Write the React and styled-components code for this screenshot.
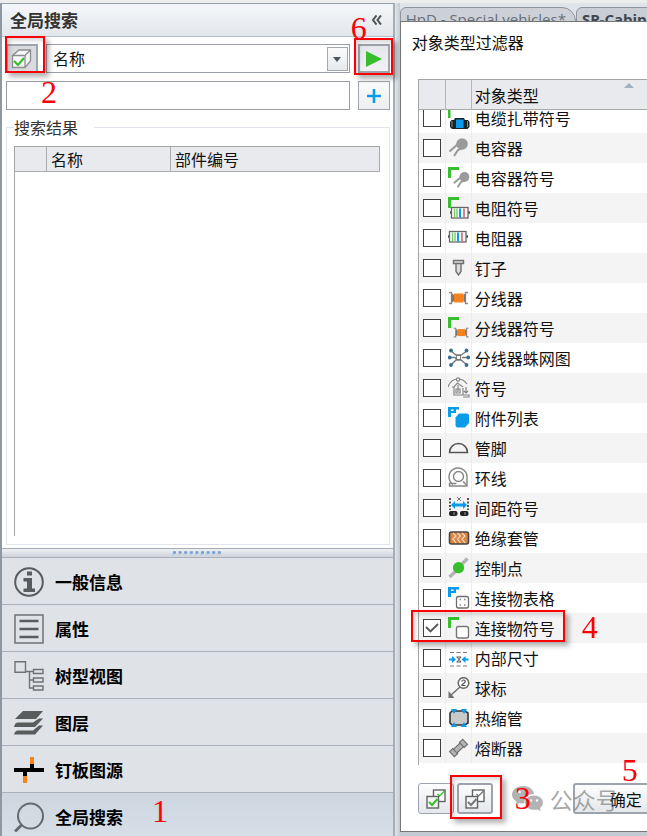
import { useLayoutEffect, useRef, useState } from "react";
import styled, { createGlobalStyle } from "styled-components";

const GlobalStyle = createGlobalStyle`
  * {
    box-sizing: border-box;
  }
  body {
    margin: 0;
    overflow: hidden;
    background: #ffffff;
    color: #111111;
    font-family: "Noto Sans CJK SC", sans-serif;
    font-size: 16px;
    line-height: 24px;
  }
  button, input, select {
    font: inherit;
    color: inherit;
    margin: 0;
  }
`;

const Page = styled.div`
  display: grid;
  grid-template-columns: minmax(0, 61fr) minmax(0, 39fr);
  height: 100vh;
  padding-top: 3px;
  background: #ededee;
`;

/* ---------- left panel ---------- */

const Sidebar = styled.aside`
  display: flex;
  flex-direction: column;
  min-height: 0;
  border-top: 1px solid #98a1aa;
  border-left: 2px solid #8e98a2;
  border-right: 2px solid #a4aeb9;
  background: #ffffff;
`;

const SidebarHeader = styled.header`
  display: flex;
  align-items: center;
  justify-content: space-between;
  height: 33px;
  flex: none;
  padding: 0 10px 0 8px;
  border-bottom: 1px solid #b3c0cc;
  background: linear-gradient(#f5f7f9, #e2e6eb);
`;

const SidebarTitle = styled.h1`
  margin: 0;
  font-size: 17px;
  font-weight: 700;
  color: #333333;
`;

const CollapseButton = styled.button`
  display: flex;
  padding: 0;
  border: 0;
  background: none;
`;

const SearchForm = styled.form`
  display: flex;
  flex-direction: column;
  gap: 8px;
  padding: 7px 3px 6px 4px;
`;

const SearchRow = styled.div`
  display: flex;
  gap: 8px;
  height: 29px;
`;

const Anchor = styled.div`
  position: relative;
  display: flex;
`;

const ToolButton = styled.button`
  display: flex;
  align-items: center;
  justify-content: center;
  width: 32px;
  padding: 0;
  border: ${({ $pressed }) => ($pressed ? "2px" : "1px")} solid #9fa5ad;
  background: ${({ $pressed }) =>
    $pressed ? "#d9dbdf" : "linear-gradient(#fbfbfc, #eceef1)"};
`;

const RunButton = styled(ToolButton)`
  background: linear-gradient(#e4e6e9, #f1f2f4);
`;

const SelectBox = styled.div`
  position: relative;
  display: flex;
  flex: 1;
`;

const FieldSelect = styled.select`
  flex: 1;
  appearance: none;
  padding: 0 28px 2px 6px;
  border: 1px solid #9a9fa7;
  border-radius: 0;
  background: #ffffff;
`;

const SelectArrow = styled.span`
  position: absolute;
  top: 3px;
  right: 2px;
  bottom: 2px;
  width: 21px;
  display: flex;
  align-items: center;
  justify-content: center;
  border: 1px solid #a3a9b2;
  background: linear-gradient(#fbfbfc, #e6e9ed);
  pointer-events: none;
`;

const SearchInput = styled.input`
  flex: 1;
  min-width: 0;
  padding: 0 6px;
  border: 1px solid #9a9fa7;
  background: #ffffff;
`;

const ResultGroup = styled.fieldset`
  display: flex;
  flex-direction: column;
  flex: 1;
  min-height: 0;
  min-width: 0;
  margin: 0 3px 3px 4px;
  padding: 8px 9px 8px 7px;
  border: 1px solid #e1e4ec;
`;

const GroupTitle = styled.legend`
  padding: 0 16px 0 0;
  line-height: 22px;
  color: #333333;
`;

const ResultArea = styled.div`
  flex: 1;
  border-left: 1px solid #a5a5a5;
`;

const ResultTable = styled.table`
  width: 100%;
  table-layout: fixed;
  border-collapse: separate;
  border-spacing: 0;
  border-top: 1px solid #a5a5a5;
`;

const ResultHead = styled.th`
  width: ${({ $width }) => $width || "auto"};
  height: 25px;
  padding: 0 4px;
  border-right: 1px solid #a9abae;
  border-bottom: 1px solid #a9abae;
  background: #e9eaee;
  font-weight: 400;
  line-height: 22px;
  text-align: left;
`;

const Splitter = styled.div`
  display: flex;
  justify-content: center;
  align-items: center;
  flex: none;
  height: 10px;
  border-top: 1px solid #a3adb8;
  border-bottom: 1px solid #a9b2bc;
  background: linear-gradient(#eef0f3, #ced3da);
`;

const Nav = styled.nav`
  display: flex;
  flex-direction: column;
  flex: none;
`;

const NavItem = styled.a`
  position: relative;
  display: flex;
  align-items: center;
  gap: 11px;
  padding: 9px 12px 7px;
  border-bottom: 1px solid #a9b2bc;
  background: ${({ $active }) =>
    $active ? "linear-gradient(#cdd5df, #d6dee8)" : "#dfe2e7"};
  color: #000000;
  font-size: 17px;
  font-weight: 700;
  text-decoration: none;

  &:last-child {
    padding-bottom: 4px;
    border-bottom: 0;
  }
`;

/* ---------- right side ---------- */

const Workspace = styled.main`
  display: flex;
  flex-direction: column;
  min-width: 0;
  min-height: 0;
  padding: 0 0 4px 5px;
  background: linear-gradient(90deg, #e3e6ea, #c4cad1 5px);
  overflow: hidden;
`;

const TabStrip = styled.div`
  display: flex;
  flex: none;
  height: 18px;
  padding-top: 4px;
  background: #dfe4ea;
  overflow: hidden;
`;

const Tab = styled.button`
  display: flex;
  flex: none;
  height: 30px;
  padding: 1px 9px 0 5px;
  border: 1px solid #8e959d;
  border-radius: 6px 14px 0 0;
  background: ${({ $active }) => ($active ? "#c9ced5" : "#cdd1d7")};
  color: ${({ $active }) => ($active ? "#3c4650" : "#64707d")};
  font-family: "Open Sans", sans-serif;
  font-size: 15px;
  font-weight: ${({ $active }) => ($active ? 700 : 400)};
  line-height: 20px;
  white-space: nowrap;
`;

const Dialog = styled.section`
  display: flex;
  flex-direction: column;
  flex: 1;
  min-height: 0;
  border: 1px solid #767676;
  border-right: 0;
  background: #ffffff;
`;

const DialogTitle = styled.h2`
  flex: none;
  height: 57px;
  margin: 0;
  padding: 8px 11px;
  font-size: 16px;
  font-weight: 400;
`;

const ListFrame = styled.div`
  position: relative;
  display: flex;
  flex: 1;
  min-height: 0;
  margin-left: 17px;
`;

const ListScroller = styled.div`
  flex: 1;
  padding-bottom: 2px;
  border-left: 1px solid #a5a5a5;
  overflow: auto;
  scrollbar-width: none;
`;

const TypeTable = styled.table`
  width: 100%;
  table-layout: fixed;
  border-collapse: separate;
  border-spacing: 0;
`;

const TypeHead = styled.th`
  position: sticky;
  top: 0;
  z-index: 1;
  width: ${({ $width }) => $width || "auto"};
  height: 31px;
  padding: 0 3px;
  border-top: 1px solid #a5a5a5;
  border-right: 1px solid #b4b5b8;
  border-bottom: 1px solid #a9a9a9;
  background: #e9eaee;
  font-weight: 400;
  text-align: left;

  &:last-child {
    border-right: 0;
  }
`;

const HeadContent = styled.span`
  display: flex;
  align-items: flex-start;
  justify-content: space-between;
  padding-right: 10px;
`;

const TypeRow = styled.tr`
  background: #ffffff;

  &:nth-child(even) {
    background: #f4f4f4;
  }
`;

const TypeCell = styled.td`
  height: 30px;
  padding: 0 ${({ $icon }) => ($icon ? "2px" : "3px")};
  border-right: 1px solid #ececec;
  line-height: 0;
  white-space: nowrap;

  &:last-child {
    border-right: 0;
  }
`;

const TypeLabel = styled.label`
  line-height: 24px;
`;

const Check = styled.input`
  appearance: none;
  display: block;
  width: 18px;
  height: 18px;
  margin: 0 auto;
  border: 1px solid #3f3f3f;
  background: #ffffff;
`;

const CheckBoxWrap = styled.span`
  position: relative;
  display: block;

  svg {
    position: absolute;
    inset: 0;
    margin: auto;
    pointer-events: none;
  }
`;

const DialogFooter = styled.footer`
  position: relative;
  display: flex;
  gap: 3px;
  flex: none;
  padding: 18px 0 17px 17px;
`;

const FooterButton = styled.button`
  display: flex;
  align-items: center;
  justify-content: center;
  flex: none;
  height: 31px;
  min-width: 36px;
  padding: 0 ${({ $wide }) => ($wide ? "35px" : "0")};
  margin-left: ${({ $wide }) => ($wide ? "77px" : "0")};
  border: ${({ $strong }) => ($strong ? "2px" : "1px")} solid #9ca3ae;
  border-radius: 3px;
  background: linear-gradient(#fdfdfd, #e4e7eb);
`;

const Watermark = styled.div`
  position: absolute;
  top: 18px;
  left: 111px;
  display: flex;
  align-items: center;
  gap: 6px;
  color: rgba(110, 110, 110, 0.6);
  font-size: 23px;
  line-height: 32px;
  white-space: nowrap;
  pointer-events: none;
`;

/* ---------- red step marks ---------- */

const MarkBox = styled.span`
  position: absolute;
  z-index: 2;
  top: ${({ $top }) => $top}px;
  left: ${({ $left }) => $left}px;
  width: ${({ $width }) => $width}px;
  height: ${({ $height }) => $height}px;
  border: 2px solid #fb0007;
  box-shadow: 4px 4px 5px rgba(0, 0, 0, 0.3), inset 3px 3px 4px rgba(0, 0, 0, 0.15);
  pointer-events: none;
`;

const MarkNumber = styled.span`
  position: absolute;
  z-index: 3;
  top: ${({ $top }) => $top}px;
  left: ${({ $left }) => $left}px;
  color: #fb0007;
  font-family: "Liberation Serif", serif;
  font-size: 32px;
  font-weight: 400;
  line-height: 32px;
  pointer-events: none;
`;

/* ---------- icons ---------- */

const GREEN = "#37be2d";
const BLUE = "#0a9bea";
const ORANGE = "#f5821f";
const GRAY = "#9a9a9a";
const DARK = "#595b5d";

const GreenCorner = () => <path d="M0 0h11v3H3v8H0z" fill={GREEN} />;

const BlueFlag = () => (
  <path d="M0 0h11v2.500H8V6H3v4H0zM3 2.500v1.500h2.500V2.500z" fill={BLUE} fillRule="evenodd" />
);

const Resistor = ({ y = 0, x = 0 }) => (
  <g transform={`translate(${x} ${y})`} fill="none">
    <path d="M0 5.500h2M18 5.500h2" stroke="#555" strokeWidth="2.500" />
    <rect x="1.500" y="0.500" width="16.500" height="10.500" fill="#fff" stroke="#666" strokeWidth="1.300" />
    <path d="M4.500 1.500v9M7 1.500v9" stroke="#75c96d" strokeWidth="1.400" />
    <path d="M10 1.500v9" stroke={BLUE} strokeWidth="2" />
    <path d="M14 1.500v9" stroke="#c96a6a" strokeWidth="1.600" />
  </g>
);

const Capacitor = () => (
  <>
    <circle cx="14" cy="7" r="5.800" fill={GRAY} />
    <path d="M10 7 1.500 14.500M14 11l-4 2-4 6" stroke={GRAY} strokeWidth="2.200" fill="none" />
  </>
);

const Splice = () => (
  <>
    <rect x="6" y="6.500" width="9.500" height="9" fill={ORANGE} />
    <path d="M1 5.500h2.500v11H1M20 5.500h-2.500v11H20" fill="none" stroke="#8a8a8a" strokeWidth="1.300" />
    <path d="M3.500 6 6 8v6l-2.500 2zM17.500 6 15.500 8v6l2 2z" fill="#777" />
  </>
);

const typeIcons = {
  cableTie: (
    <>
      <path d="M0 0h2.500v11H0z" fill={GREEN} />
      <path d="M7 11h9l1 2h3l1.500 2v5l-2 2H4l-2-2v-5l1.500-2H6z" fill="#1c2226" />
      <path d="M8 12.500h7.500V21H8z" fill={BLUE} />
      <path d="M4 14v6M19.500 14v6" stroke="#8a8a8a" />
    </>
  ),
  capacitor: <Capacitor />,
  capacitorSymbol: (
    <>
      <GreenCorner />
      <g transform="translate(4.500 4) scale(.85)">
        <Capacitor />
      </g>
    </>
  ),
  resistorSymbol: (
    <>
      <GreenCorner />
      <Resistor x={2} y={10} />
    </>
  ),
  resistor: <Resistor y={4} />,
  nail: (
    <path
      d="M5.500 3.500h10v3h-10zM8 6.500h5v8L10.500 18 8 14.500z"
      fill="#ddd"
      stroke="#707070"
      strokeWidth="1.400"
    />
  ),
  splice: <Splice />,
  spliceSymbol: (
    <>
      <GreenCorner />
      <g transform="translate(5 7) scale(.78)">
        <Splice />
      </g>
    </>
  ),
  spider: (
    <>
      <path
        d="M3 4l5 4h5l6-4M3 18l5-5h5l6 5M1 10.500h6l2 2M20 10.500h-6M8 8l5 5M13 8l-5 5"
        fill="none"
        stroke="#777"
        strokeWidth="1.300"
      />
      <rect x="8.500" y="8.500" width="4" height="4" fill="#fff" stroke="#777" />
      {[
        [3, 3.5],
        [18.5, 3.5],
        [1.7, 10.5],
        [20.2, 10.5],
        [3, 18],
        [18.5, 18],
      ].map(([cx, cy]) => (
        <circle key={`${cx}-${cy}`} cx={cx} cy={cy} r="1.900" fill="#356f92" />
      ))}
    </>
  ),
  symbol: (
    <g fill="none" stroke="#858585" strokeWidth="1.200">
      <path d="M0 10C2 4 6 2 10 2s7 2 9 5" />
      <circle cx="10" cy="2.500" r="1.600" fill="#fff" />
      <path d="M4 10h2l3.500-4L15 10M6 10v8h9v-7M10 8v7M8 12h4v4H8zM15 18h6v2h-6M18 10v6m-2-2 2 2 2-2" />
    </g>
  ),
  attachment: (
    <>
      <BlueFlag />
      <path d="M11 6.500h8.500l1.500 1.500v8l-4 4.500H9L7.500 19v-8.500z" fill={BLUE} />
    </>
  ),
  pin: (
    <path
      d="M1.500 15.500c0-5 4-9 9-9s9 4 9 9z"
      fill="none"
      stroke="#555"
      strokeWidth="1.500"
    />
  ),
  loop: (
    <g fill="none" stroke="#858585" strokeWidth="1.400">
      <path d="M5 17.500a9 9 0 1 1 14-8V19H1.500v-2.500h7" />
      <circle cx="10.500" cy="9.500" r="5" />
      <path d="M15 14.500l4 4" />
    </g>
  ),
  distance: (
    <>
      <path d="M2 1v12M20 1v12" stroke="#222" strokeWidth="1.500" strokeDasharray="2 1.500" />
      <path d="M9 0l4 4M13 0L9 4" stroke="#777" />
      <path d="M3 8l4-4v2.500h8V4l4 4-4 4V9.500H7V12z" fill={BLUE} />
      <rect x="1" y="14" width="8.500" height="5" rx="2" fill="#222" />
      <rect x="12" y="14" width="8.500" height="5" rx="2" fill="#222" />
      <path d="M6 15v3M17 15v3" stroke="#999" />
    </>
  ),
  sleeve: (
    <>
      <rect x="1.500" y="5" width="19" height="12" rx="2" fill="#d98746" stroke="#444" strokeWidth="1.600" />
      <path
        d="M5 6l3 3-3 3 3 4M9.500 6l3 3-3 3 3 4M14 6l3 3-3 3 3 4"
        fill="none"
        stroke="#f8d9bd"
        strokeWidth="1.200"
      />
    </>
  ),
  control: (
    <>
      <path d="M1.500 20 8 14M13 8l6.500-6.500" stroke="#b4b4b4" strokeWidth="3.500" />
      <circle cx="10.500" cy="10.700" r="5.600" fill={GREEN} />
    </>
  ),
  connectorTable: (
    <>
      <BlueFlag />
      <rect x="8.500" y="9.500" width="12" height="11.500" rx="2" fill="#fff" stroke="#6e6e6e" strokeWidth="1.300" />
      <path d="M11.500 12.500h1.500M16 12.500h1.500M11.500 18h1.500M16 18h1.500" stroke="#888" strokeWidth="1.500" />
    </>
  ),
  connectorSymbol: (
    <>
      <GreenCorner />
      <rect x="8.500" y="9.500" width="12" height="11.500" rx="2" fill="#fff" stroke="#777" strokeWidth="1.400" />
    </>
  ),
  innerSize: (
    <>
      <path d="M2 5.500h18M2 19h18" stroke="#777" strokeWidth="1.200" strokeDasharray="4 2.500" />
      <path d="M1 11.500h3V9l4 3.500L4 16v-2.500H1zM20.500 11.500h-3V9l-4 3.500 4 3.500v-2.500h3z" fill={BLUE} />
      <path d="M8.500 10h4.500M8.500 15h4.500M9 10l4 5M13 10l-4 5" stroke="#555" />
    </>
  ),
  balloon: (
    <>
      <circle cx="15.500" cy="6" r="5.300" fill="#fff" stroke="#666" strokeWidth="1.500" />
      <path d="M13.800 4.500c0-2 3.500-2 3.500 0 0 1.500-3.500 2.500-3.500 4h3.800" fill="none" stroke="#555" strokeWidth="1.200" />
      <path d="M12 10 3 18" stroke="#707070" strokeWidth="1.500" />
      <path d="M.5 14v7h6z" fill="#707070" />
    </>
  ),
  shrink: (
    <>
      <path d="M4 4h13l3 2v10l-3 2H4l-2-2V6z" fill="#c9c9c9" stroke="#333" strokeWidth="1.600" />
      <path d="M3 2h6L6 7zM13 2h6l-3 5zM3 20h6l-3-5zM13 20h6l-3-5z" fill={BLUE} />
    </>
  ),
  fuse: (
    <g transform="rotate(-43 10.500 11)" fill="#b4b4b4" stroke="#707070" strokeWidth="1.200">
      <path d="M5 8.500h11v5H5z" />
      <path d="M1.500 7.500H6v7H1.500zM15 7.500h4.500v7H15z" />
    </g>
  ),
};

const CubeIcon = () => (
  <svg width="22" height="22" viewBox="0 0 22 22">
    <path
      d="M1.500 7.500 8 2h11.500v11L14 19.500H1.500zM1.500 7.500H14v12M14 7.500 19.500 2"
      fill="#f7f7f7"
      stroke="#8b8d90"
      strokeWidth="1.300"
    />
    <path d="m3 13 4 4 6-7" fill="none" stroke={GREEN} strokeWidth="2.200" />
  </svg>
);

const SquaresIcon = ({ color }) => (
  <svg width="20" height="20" viewBox="0 0 20 20" fill="none">
    <rect x="7.500" y="1" width="11.500" height="11.500" fill="#fff" stroke="#606366" strokeWidth="1.400" />
    <path d="m11.500 5 2 2 5-5" stroke={color} strokeWidth="1.300" />
    <rect x="1" y="7.500" width="11.500" height="11.500" fill="#f4f4f4" stroke="#606366" strokeWidth="1.400" />
    <path d="m3 13 3 3 5.500-6" stroke={color} strokeWidth="2" />
  </svg>
);

const ChatIcon = () => (
  <svg width="32" height="26" viewBox="0 0 32 26">
    <path
      d="M11 0c6 0 10.500 3.500 11 8-6 0-10 4-9.500 9-1.500 1-3.500.500-5 0L3.500 19l1-3.500C1.500 13.500 0 11.500 0 8.500 0 4 5 0 11 0z"
      fill="#b3b3b3"
    />
    <path
      d="M22 9.500c5 0 9 3 9 7 0 2-1 4-3 5.500l.700 3L25 23.500c-6 1.500-12-2-12-7 0-4 4-7 9-7z"
      fill="#b3b3b3"
    />
    <g fill="#fff">
      <circle cx="7.500" cy="6" r="1.300" />
      <circle cx="14.500" cy="6" r="1.300" />
      <circle cx="19" cy="14.500" r="1.200" />
      <circle cx="25" cy="14.500" r="1.200" />
    </g>
  </svg>
);

const navItems = [
  {
    label: "一般信息",
    icon: (
      <>
        <circle cx="15" cy="15" r="13.800" fill="none" stroke={DARK} strokeWidth="2" />
        <path d="M13 4.500h5v4h-5zM9.500 11H18v10.500h3V25H9.500v-3.500H13v-7H9.500z" fill={DARK} />
      </>
    ),
  },
  {
    label: "属性",
    icon: (
      <>
        <rect x="1" y="1" width="28" height="28" fill="none" stroke="#707274" strokeWidth="1.500" />
        <path d="M5.500 7h19M5.500 15h19M5.500 23h19" stroke={DARK} strokeWidth="2.400" />
      </>
    ),
  },
  {
    label: "树型视图",
    icon: (
      <g fill="none" stroke="#707274" strokeWidth="1.400">
        <path d="M1 .7h10.500v10.500H1zM11.500 10.500h8M15.500 10.500V27h4M15.500 19h4" />
        <path d="M19.500 8.500h9.500v4h-9.500zM19.500 17h9.500v4h-9.500zM19.500 25h9.500v4h-9.500z" />
      </g>
    ),
  },
  {
    label: "图层",
    icon: (
      <path
        d="M9 3h20l-7 8H1zM1 16l2-1.500h16l6-4h4L21 19H0zM1 24l2-1.500h16l6-5h4L21 26.500H0z"
        fill={DARK}
      />
    ),
  },
  {
    label: "钉板图源",
    icon: (
      <>
        <path d="M0 13h16V8h4v5h10v4H13v5H9v-5H0z" fill="#000" />
        <path d="M16 2h4v7h-4zM9 21h4v7H9z" fill={ORANGE} />
      </>
    ),
  },
  {
    label: "全局搜索",
    active: true,
    icon: (
      <>
        <circle cx="16.500" cy="14" r="12.500" fill="none" stroke="#666a6e" strokeWidth="2" />
        <path d="M7.500 23 1 29.500" stroke="#666a6e" strokeWidth="3" />
      </>
    ),
  },
];

const objectTypes = [
  ["cableTie", "电缆扎带符号"],
  ["capacitor", "电容器"],
  ["capacitorSymbol", "电容器符号"],
  ["resistorSymbol", "电阻符号"],
  ["resistor", "电阻器"],
  ["nail", "钉子"],
  ["splice", "分线器"],
  ["spliceSymbol", "分线器符号"],
  ["spider", "分线器蛛网图"],
  ["symbol", "符号"],
  ["attachment", "附件列表"],
  ["pin", "管脚"],
  ["loop", "环线"],
  ["distance", "间距符号"],
  ["sleeve", "绝缘套管"],
  ["control", "控制点"],
  ["connectorTable", "连接物表格"],
  ["connectorSymbol", "连接物符号"],
  ["innerSize", "内部尺寸"],
  ["balloon", "球标"],
  ["shrink", "热缩管"],
  ["fuse", "熔断器"],
];

function SearchPanel() {
  return (
    <Sidebar>
      <SidebarHeader>
        <SidebarTitle>全局搜索</SidebarTitle>
        <CollapseButton type="button" aria-label="折叠">
          <svg width="12" height="10" viewBox="0 0 12 10">
            <path d="M5.500.500 2 5l3.500 4.500M10 .5 6.500 5 10 9.500" fill="none" stroke="#505050" strokeWidth="2" />
          </svg>
        </CollapseButton>
      </SidebarHeader>

      <SearchForm onSubmit={(e) => e.preventDefault()}>
        <SearchRow>
          <Anchor>
            <ToolButton type="button" $pressed aria-label="对象类型过滤器">
              <CubeIcon />
            </ToolButton>
            <MarkBox $top={-8} $left={-1} $width={40} $height={37} />
            <MarkNumber $top={32} $left={35}>2</MarkNumber>
          </Anchor>
          <SelectBox>
            <FieldSelect aria-label="搜索字段" defaultValue="名称">
              <option>名称</option>
              <option>部件编号</option>
            </FieldSelect>
            <SelectArrow>
              <svg width="8" height="5" viewBox="0 0 8 5">
                <path d="M0 0h8L4 5z" fill="#4b5563" />
              </svg>
            </SelectArrow>
          </SelectBox>
          <Anchor>
            <RunButton type="submit" $pressed aria-label="搜索">
              <svg width="16" height="16" viewBox="0 0 16 16">
                <path d="M0 0l16 8-16 8z" fill={GREEN} />
              </svg>
            </RunButton>
            <MarkBox $top={-6} $left={-4} $width={39} $height={37} />
            <MarkNumber $top={-32} $left={-7}>6</MarkNumber>
          </Anchor>
        </SearchRow>
        <SearchRow>
          <SearchInput type="text" aria-label="搜索内容" />
          <ToolButton type="button" aria-label="添加">
            <svg width="14" height="14" viewBox="0 0 14 14">
              <path d="M7 0v14M0 7h14" stroke={BLUE} strokeWidth="2.600" />
            </svg>
          </ToolButton>
        </SearchRow>
      </SearchForm>

      <ResultGroup>
        <GroupTitle>搜索结果</GroupTitle>
        <ResultArea>
          <ResultTable>
            <thead>
              <tr>
                <ResultHead $width="32px" aria-label="图标" />
                <ResultHead $width="34%">名称</ResultHead>
                <ResultHead>部件编号</ResultHead>
              </tr>
            </thead>
          </ResultTable>
        </ResultArea>
      </ResultGroup>

      <Splitter>
        <svg width="50" height="5" viewBox="0 0 50 5">
          <path d="M1 1.500h49" stroke="#6f9fd0" strokeWidth="2.500" strokeDasharray="3 2.600" />
          <path d="M0 3.500h49" stroke="#b9cfe6" strokeWidth="1.500" strokeDasharray="3 2.600" />
        </svg>
      </Splitter>

      <Nav>
        {navItems.map(({ label, icon, active }) => (
          <NavItem key={label} href="#" $active={active}>
            <svg width="30" height="30" viewBox="0 0 30 30">
              {icon}
            </svg>
            {label}
            {active && <MarkNumber $top={2} $left={150}>1</MarkNumber>}
          </NavItem>
        ))}
      </Nav>
    </Sidebar>
  );
}

function TypeFilterDialog() {
  const scroller = useRef(null);
  const [checked, setChecked] = useState({ connectorSymbol: true });

  // the list opens slightly scrolled, first row half under the header
  useLayoutEffect(() => {
    scroller.current.scrollTop = 7;
  }, []);

  return (
    <Dialog role="dialog" aria-labelledby="filter-title">
      <DialogTitle id="filter-title">对象类型过滤器</DialogTitle>
      <ListFrame>
        <ListScroller ref={scroller}>
          <TypeTable>
            <thead>
              <tr>
                <TypeHead $width="27px" aria-label="选择" />
                <TypeHead $width="26px" aria-label="图标" />
                <TypeHead>
                  <HeadContent>
                    对象类型
                    <svg width="10" height="5" viewBox="0 0 10 5">
                      <path d="M5 0l5 5H0z" fill="#9fb2bf" />
                    </svg>
                  </HeadContent>
                </TypeHead>
              </tr>
            </thead>
            <tbody>
              {objectTypes.map(([id, label]) => (
                <TypeRow key={id}>
                  <TypeCell>
                    <CheckBoxWrap>
                      <Check
                        id={id}
                        type="checkbox"
                        checked={!!checked[id]}
                        onChange={(e) => setChecked({ ...checked, [id]: e.target.checked })}
                      />
                      {checked[id] && (
                        <svg width="14" height="12" viewBox="0 0 14 12">
                          <path d="m1 5 4.500 4.500L13 2" fill="none" stroke="#555" strokeWidth="1.800" />
                        </svg>
                      )}
                    </CheckBoxWrap>
                  </TypeCell>
                  <TypeCell $icon>
                    <svg width="22" height="22" viewBox="0 0 22 22">
                      {typeIcons[id]}
                    </svg>
                  </TypeCell>
                  <TypeCell>
                    <TypeLabel htmlFor={id}>{label}</TypeLabel>
                  </TypeCell>
                </TypeRow>
              ))}
            </tbody>
          </TypeTable>
        </ListScroller>
        <MarkBox $top={531} $left={-7} $width={154} $height={32} />
        <MarkNumber $top={532} $left={164}>4</MarkNumber>
      </ListFrame>
      <DialogFooter>
        <FooterButton type="button" aria-label="全选">
          <SquaresIcon color={GREEN} />
        </FooterButton>
        <Anchor>
          <FooterButton type="button" $strong aria-label="全部取消">
            <SquaresIcon color="#777777" />
          </FooterButton>
          <MarkBox $top={-8} $left={-7} $width={52} $height={44} />
          <MarkNumber $top={-1} $left={58}>3</MarkNumber>
        </Anchor>
        <FooterButton type="button" $strong $wide>
          确定
        </FooterButton>
        <Watermark>
          <ChatIcon />
          公众号
        </Watermark>
        <MarkNumber $top={-11} $left={221}>5</MarkNumber>
      </DialogFooter>
    </Dialog>
  );
}

export default function App() {
  return (
    <>
      <GlobalStyle />
      <Page>
        <SearchPanel />
        <Workspace>
          <TabStrip>
            <Tab type="button">HpD - Special vehicles*</Tab>
            <Tab type="button" $active>SP-Cabinet</Tab>
          </TabStrip>
          <TypeFilterDialog />
        </Workspace>
      </Page>
    </>
  );
}
